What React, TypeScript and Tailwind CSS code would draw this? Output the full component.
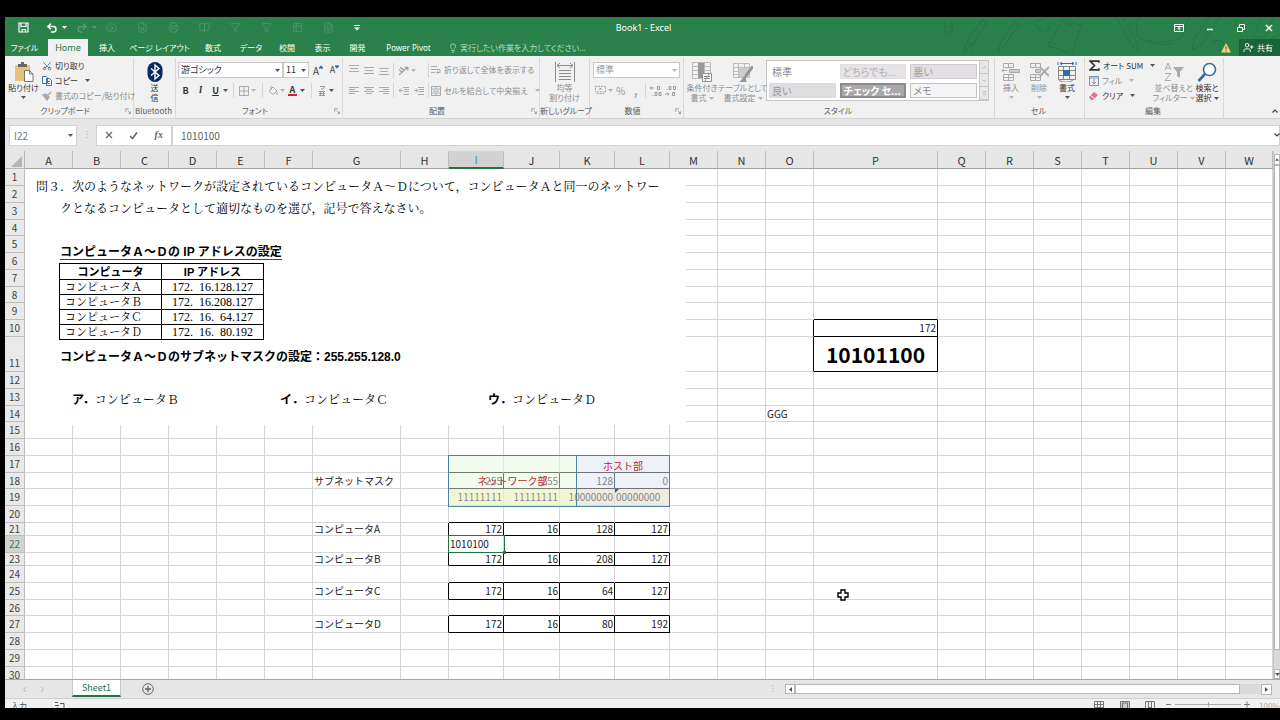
import type { ReactNode } from "react";
import { Undo2, Redo2, Camera, FileSearch, Printer, BookOpen, Filter, Funnel, Table2, FileText, Lightbulb, UserPlus, Scissors } from "lucide-react";

/* ---------- small shared pieces ---------- */

function Caret({ dim = false }: { dim?: boolean }) {
  return (
    <svg viewBox="0 0 5 3" className={`h-[3px] w-[5px] shrink-0 ${dim ? "text-[#b5b5b5]" : "text-[#555]"}`} aria-hidden="true">
      <path d="M0 0h5L2.500 3z" fill="currentColor" />
    </svg>
  );
}

function Ico({ children, className, box = 20 }: { children: ReactNode; className: string; box?: number }) {
  return (
    <svg viewBox={`0 0 ${box} ${box}`} className={`shrink-0 ${className}`} fill="none" stroke="currentColor" aria-hidden="true">
      {children}
    </svg>
  );
}

function Sep() {
  return <span className="mx-0.5 h-[15px] w-px shrink-0 bg-[#d6d6d6]" />;
}

function Launcher() {
  return (
    <Ico box={8} className="size-[6px] text-[#888]">
      <path d="M1 5V1h4M3.500 3.500l4 4M7.500 4.500v3h-3" />
    </Ico>
  );
}

function Group({ label, width, launcher = false, children }: { label: string; width: string; launcher?: boolean; children: ReactNode }) {
  return (
    <section aria-label={label} className={`flex shrink-0 flex-col border-r border-[#d9d9d9] ${width}`}>
      <div className="flex h-[46px]">{children}</div>
      <div className="flex h-[14px] items-center pr-0.5 text-[8px] leading-3 text-[#5a5a5a]">
        <span className="flex-1 whitespace-nowrap text-center">{label}</span>
        {launcher && <Launcher />}
      </div>
    </section>
  );
}

function BigButton({ icon, lines, width, dim = false, caret = "none" }: { icon: ReactNode; lines: string[]; width: string; dim?: boolean; caret?: "none" | "below" | "inline" }) {
  return (
    <button type="button" className={`flex shrink-0 flex-col items-center pt-0.5 ${width} ${dim ? "text-[#8c8c8c]" : "text-[#333]"}`}>
      <span className="flex h-[23px] items-center justify-center">{icon}</span>
      {lines.map((line, i) => (
        <span key={line} className="flex h-[10px] items-center gap-0.5 whitespace-nowrap text-[8px] leading-[10px]">
          {line}
          {caret === "inline" && i === lines.length - 1 && <Caret dim={dim} />}
        </span>
      ))}
      {caret === "below" && <span className="flex h-[8px] items-center"><Caret dim={dim} /></span>}
    </button>
  );
}

function SmallButton({ icon, label, dim = false, caret = false }: { icon: ReactNode; label: string; dim?: boolean; caret?: boolean }) {
  return (
    <button type="button" className={`flex h-[15px] items-center gap-[3px] whitespace-nowrap text-[8px] ${dim ? "text-[#8c8c8c]" : "text-[#333]"}`}>
      {icon}
      {label}
      {caret && <span className="pl-1"><Caret dim={dim} /></span>}
    </button>
  );
}

function Tool({ label, width = "w-[15px]", children }: { label: string; width?: string; children: ReactNode }) {
  return (
    <button type="button" aria-label={label} className={`flex h-[15px] shrink-0 items-center justify-center ${width}`}>
      {children}
    </button>
  );
}

function Lines({ d }: { d: string }) {
  return (
    <Ico box={10} className="size-[10px] text-[#aaa]">
      <path d={d} />
    </Ico>
  );
}

function Combo({ label, value, width, dim = false }: { label: string; value: string; width: string; dim?: boolean }) {
  return (
    <div className={`relative h-[16px] ${width}`}>
      <select aria-label={label} className={`block h-full w-full appearance-none border border-[#c9c9c9] bg-white pl-0.5 text-[9px] leading-3 ${dim ? "text-[#999]" : "text-[#333]"}`}>
        <option>{value}</option>
      </select>
      <span className="pointer-events-none absolute inset-y-0 right-[3px] flex items-center"><Caret dim={dim} /></span>
    </div>
  );
}

/* ---------- title bar and tabs ---------- */

function Doodles() {
  return (
    <svg viewBox="0 0 340 38" className="pointer-events-none absolute right-0 top-0 h-[38px] w-[340px] text-[#237642]" fill="none" stroke="currentColor" aria-hidden="true">
      <path d="M5 7v8q3 5 7 0V7M3 6h3m5 0h3M7 10h4" />
      <path d="M24 34l3-10L42 3l5 3-15 22zM27 24l5 4M40 6l4 3" />
      <path d="M32 34l3-9M58 34l3-9L74 4l5 3-14 21z" />
      <path d="M94 6l8-4 8 8-7 6zM108 29l14-25 19 4-9 30M108 29l20 6M124 6l9 3M112 26l6 2" />
      <path d="M176 0l17 30 5 3-1-7L183 0M193 30l4-4" />
      <path d="M199 0q-5 13 0 21 21 8 42 0l8-21M205 24q15 6 30 2" />
      <path d="M252 33l2-11 16-22M252 33l10-6 18-27M272 26q8-6 12 1t-6 7" />
      <path d="M295 4l12 28 3-2-9-26zM322 0l-9 20h12l9-20M330 22l10-4" />
    </svg>
  );
}

const QAT = [Camera, FileSearch, Printer, BookOpen, Filter, Funnel, Table2, FileText];
const QAT_NAMES = ["カメラ", "印刷プレビュー", "印刷", "ページ設定", "フィルター解除", "フィルター", "表", "フォーム"];

function TitleBar() {
  return (
    <div className="relative grid h-[21px] grid-cols-[1fr_auto_1fr] items-center text-white">
      <div className="flex items-center pl-[13px]">
        <button type="button" aria-label="上書き保存" className="w-[28px]">
          <Ico box={11} className="size-[11px]">
            <path d="M1 1h9v9H1zM3 1v3.500h5V1M4 10V7.500h3.500V10" strokeWidth="1.200" />
          </Ico>
        </button>
        <button type="button" aria-label="元に戻す" className="w-[16px]"><Undo2 size={12} strokeWidth={3} /></button>
        <span className="w-[14px]"><svg viewBox="0 0 5 3" className="h-[3px] w-[5px]" aria-hidden="true"><path d="M0 0h5L2.500 3z" fill="#fff" /></svg></span>
        <button type="button" aria-label="やり直し" className="w-[16px] text-[#55a073]"><Redo2 size={12} strokeWidth={2.500} /></button>
        <span className="w-[14px]"><svg viewBox="0 0 5 3" className="h-[3px] w-[5px]" aria-hidden="true"><path d="M0 0h5L2.500 3z" fill="#55a073" /></svg></span>
        {QAT.map((Icon, i) => (
          <button key={QAT_NAMES[i]} type="button" aria-label={QAT_NAMES[i]} className="w-[31px] text-[#4b9969]"><Icon size={11} strokeWidth={2} /></button>
        ))}
        <button type="button" aria-label="カスタマイズ">
          <Ico box={6} className="size-[6px]"><path d="M0 .5h6" /><path d="M0 2.500h6L3 5.500z" fill="currentColor" stroke="none" /></Ico>
        </button>
      </div>
      <h1 className="pl-0.5 text-[9px] leading-3">Book1 - Excel</h1>
      <div className="flex items-center justify-end">
        <button type="button" aria-label="リボンの表示オプション" className="flex w-[31px] justify-center">
          <Ico box={10} className="size-[10px]"><path d="M.5 1.500h9v7h-9zM.5 3.500h9M5 7.500v-3M3.500 6L5 4.500 6.500 6" /></Ico>
        </button>
        <button type="button" aria-label="最小化" className="flex w-[31px] justify-center">
          <Ico box={8} className="size-[8px]"><path d="M1 5.500h6" strokeWidth="1.500" /></Ico>
        </button>
        <button type="button" aria-label="元のサイズに戻す" className="flex w-[31px] justify-center">
          <Ico box={8} className="size-[8px]"><path d="M.5 3.500h5v4h-5zM2.500 3V.5h5v5H6" /></Ico>
        </button>
        <button type="button" aria-label="閉じる" className="flex w-[24px] justify-center pl-0.5">
          <Ico box={8} className="size-[8px]"><path d="M1 1l6 6M7 1L1 7" strokeWidth="1.500" /></Ico>
        </button>
      </div>
    </div>
  );
}

const TABS: [string, string][] = [
  ["ファイル", "w-[39px] text-[8px]"],
  ["Home", "ml-[4px] w-[40px] bg-[#f1f1f1] text-[9px] text-[#217346]"],
  ["挿入", "w-[38px] text-[8px]"],
  ["ページ レイアウト", "w-[67px] text-[8px]"],
  ["数式", "w-[40px] text-[8px]"],
  ["データ", "w-[36px] text-[8px]"],
  ["校閲", "w-[36px] text-[8px]"],
  ["表示", "w-[35px] text-[8px]"],
  ["開発", "w-[35px] text-[8px]"],
  ["Power Pivot", "w-[67px] text-[8px]"],
];

function TabBar() {
  return (
    <div className="relative flex h-[18px] items-end text-white">
      <nav className="flex h-[17px]">
        {TABS.map(([name, look]) => (
          <button key={name} type="button" className={`whitespace-nowrap leading-3 ${look}`}>
            {name}
          </button>
        ))}
      </nav>
      <label className="flex h-[17px] items-center gap-0.5 pl-[6px] text-[#b8dcc6]">
        <Lightbulb size={10} strokeWidth={2} />
        <input
          aria-label="操作アシスト"
          placeholder="実行したい作業を入力してください..."
          className="w-[150px] bg-transparent text-[8px] leading-3 placeholder:text-[#b8dcc6]"
        />
      </label>
      <div className="ml-auto flex h-[17px] items-center">
        <svg viewBox="0 0 10 10" className="mr-2 size-[10px]" role="img" aria-label="警告">
          <path d="M5 0l5 9.500H0z" fill="#f2cf7c" />
          <path d="M5 3.500v3M5 7.500v1" stroke="#5c4a1c" />
        </svg>
        <button type="button" className="flex h-full w-[41px] items-center gap-[3px] bg-[#1b6338] pl-1 text-[8px] leading-3">
          <UserPlus size={11} strokeWidth={2} />
          共有
        </button>
      </div>
    </div>
  );
}

/* ---------- ribbon ---------- */

const STYLE_CELLS: [string, string][] = [
  ["標準", "border-white bg-white text-[#8a8a8a]"],
  ["どちらでも...", "border-[#e2dfe2] bg-[#e6e3e6] text-[#b3b0b3]"],
  ["悪い", "border-[#cfcbcf] bg-[#e2dfe2] text-[#a09da0]"],
  ["良い", "border-[#dddadd] bg-[#e0dde0] text-[#999]"],
  ["チェック セ...", "border-2 border-[#8c8a8c] bg-[#aaa8aa] font-bold text-white"],
  ["メモ", "border-[#c3c0c3] bg-[#f6f4f6] text-[#8a8a8a]"],
];

function Ribbon() {
  return (
    <div className="flex h-[63px] shrink-0 overflow-hidden border-b border-[#d2d2d2] bg-[#f1f1f1] pt-0.5 [font-feature-settings:'palt']">
      <Group label="クリップボード" width="w-[129px]" launcher>
        <BigButton
          width="w-[37px]"
          lines={["貼り付け"]}
          caret="below"
          icon={
            <Ico className="size-[20px]">
              <path d="M1 3h15v16H1z" fill="#e8c27c" stroke="none" />
              <path d="M4 2h9v3H4zM7 0h3v2H7z" fill="#666" stroke="none" />
              <path d="M10.500 8.500h5l3.500 3.500v7.500h-8.500zM15.500 8.500V12H19" fill="#fff" stroke="#777" />
            </Ico>
          }
        />
        <div className="flex flex-col">
          <SmallButton label="切り取り" icon={<Scissors size={10} className="-rotate-90 text-[#3b6a99]" />} />
          <SmallButton
            label="コピー"
            caret
            icon={<Ico box={10} className="size-[10px] text-[#4a7199]"><path d="M.5 .5h4l1 1v6h-5zM4.500 2.500h3l2 2v5h-5zM6 5.500h2M6 7.500h2" fill="#fff" /></Ico>}
          />
          <SmallButton
            dim
            label="書式のコピー/貼り付け"
            icon={<Ico box={10} className="size-[10px] text-[#aaa]"><path d="M1 4l3-1 3 3-2 3zM6 4l3-3" fill="currentColor" strokeWidth="1.400" /></Ico>}
          />
        </div>
      </Group>

      <Group label="Bluetooth" width="w-[42px]">
        <BigButton
          width="w-full"
          lines={["送", "信"]}
          icon={
            <svg viewBox="0 0 16 20" className="h-[20px] w-[16px]" aria-hidden="true">
              <rect x=".5" width="15" height="20" rx="7.500" fill="#0a2a5e" />
              <path d="M4 6.500l8 7L8 17V3l4 3.500-8 7" fill="none" stroke="#fff" strokeWidth="1.400" />
            </svg>
          }
        />
      </Group>

      <Group label="フォント" width="w-[167px]" launcher>
        <div className="flex flex-col gap-[5px] pl-0.5 pt-1">
          <div className="flex items-center">
            <Combo label="フォント名" value="游ゴシック" width="w-[105px]" />
            <Combo label="フォント サイズ" value="11" width="w-[26px]" />
            <Tool label="フォント サイズの拡大" width="w-[18px]"><span className="text-[10px] text-[#444]">A</span><Ico box={5} className="mb-1.5 size-[4px] text-[#3b6a99]"><path d="M0 4l2.500-3L5 4z" fill="currentColor" /></Ico></Tool>
            <Tool label="フォント サイズの縮小" width="w-[15px]"><span className="text-[9px] text-[#444]">A</span><Ico box={5} className="mb-1.5 size-[4px] text-[#3b6a99]"><path d="M0 1l2.500 3L5 1z" fill="currentColor" /></Ico></Tool>
          </div>
          <div className="flex items-center text-[9px] text-[#333]">
            <Tool label="太字"><b>B</b></Tool>
            <Tool label="斜体"><i className="font-serif font-bold">I</i></Tool>
            <Tool label="下線"><u className="font-bold">U</u></Tool>
            <Caret />
            <span className="w-[3px]" />
            <Sep />
            <Tool label="罫線"><Ico box={10} className="size-[10px] text-[#aaa]"><path d="M.5 .5h9v9h-9zM5 0v10M0 5h10" /></Ico></Tool>
            <Caret dim />
            <span className="w-[4px]" />
            <Sep />
            <Tool label="塗りつぶしの色"><Ico box={10} className="size-[10px] text-[#aaa]"><path d="M1 5l4-4 4 4-4 3.500zM9 6v3M3 4V0" /></Ico></Tool>
            <Caret dim />
            <Tool label="フォントの色">
              <span className="border-b-2 border-[#d0202a] px-0.5 text-[9px] font-bold leading-[9px] text-[#333]">A</span>
            </Tool>
            <Caret />
            <span className="w-[4px]" />
            <Sep />
            <Tool label="ふりがな"><Ico box={10} className="size-[10px] text-[#999]"><path d="M3 .5h5L6 3M5 2v2M2 5.500h6M2 9.500h6M3.500 5v4M6.500 5v4M2 7.500h6" /></Ico></Tool>
            <Caret />
          </div>
        </div>
      </Group>

      <Group label="配置" width="w-[197px]" launcher>
        <div className="flex flex-col gap-[5px] pl-[3px] pt-1">
          <div className="flex h-[16px] items-center">
            <Tool label="上揃え"><Lines d="M0 .5h10M1 3.500h8M0 6.500h10" /></Tool>
            <Tool label="上下中央揃え"><Lines d="M0 2.500h10M1 5.500h8M0 8.500h10" /></Tool>
            <Tool label="下揃え"><Lines d="M0 3.500h10M1 6.500h8M0 9.500h10" /></Tool>
            <Sep />
            <Tool label="方向"><Ico box={10} className="size-[11px] text-[#999]"><path d="M1 9l8-7M6 2h3v3M1 4l3 3M2 2l4 3" /></Ico></Tool>
            <Caret dim />
            <span className="w-[10px]" />
            <Sep />
            <SmallButton dim label="折り返して全体を表示する" icon={<Ico box={10} className="size-[10px] text-[#aaa]"><path d="M0 1.500h6M0 4.500h9v3H6M0 7.500h4M7 6l-1.500 1.500L7 9" /></Ico>} />
          </div>
          <div className="flex items-center">
            <Tool label="左揃え"><Lines d="M0 1.500h10M0 3.500h6M0 5.500h10M0 7.500h6" /></Tool>
            <Tool label="中央揃え"><Lines d="M0 1.500h10M2 3.500h6M0 5.500h10M2 7.500h6" /></Tool>
            <Tool label="右揃え"><Lines d="M0 1.500h10M4 3.500h6M0 5.500h10M4 7.500h6" /></Tool>
            <Sep />
            <Tool label="インデントを減らす"><Lines d="M4 1.500h6M5 3.500h5M5 5.500h5M4 8.500h6M4 4.500H0M2 2.500L0 4.500l2 2" /></Tool>
            <Tool label="インデントを増やす"><Lines d="M4 1.500h6M5 3.500h5M5 5.500h5M4 8.500h6M0 4.500h4M2 2.500l2 2-2 2" /></Tool>
            <Sep />
            <SmallButton dim caret label="セルを結合して中央揃え" icon={<Ico box={10} className="size-[10px] text-[#aaa]"><path d="M.5 .5h9v9h-9zM0 3h10M0 7h10M5 0v3M5 7v3M2 5h6" /></Ico>} />
          </div>
        </div>
      </Group>

      <Group label="新しいグループ" width="w-[50px]">
        <BigButton
          dim
          width="w-full"
          lines={["均等", "割り付け"]}
          icon={<Ico className="size-[20px]"><path d="M.5 0v20M19.500 0v20M2 3.500h16M5 1L2 3.500 5 6M15 1l3 2.500L15 6M4 8.500h12M4 11.500h12M4 14.500h12M4 17.500h12" /></Ico>}
        />
      </Group>

      <Group label="数値" width="w-[94px]" launcher>
        <div className="flex flex-col gap-[5px] pl-[3px] pt-1">
          <Combo label="表示形式" value="標準" width="w-[87px]" dim />
          <div className="flex items-center text-[10px] text-[#999]">
            <Tool label="通貨表示形式"><Ico box={12} className="size-[11px]"><path d="M.5 1.500h11v6H.5zM2 9.500h8M6 3v3M4 4.500h4" strokeDasharray="2 1" /></Ico></Tool>
            <Caret dim />
            <Tool label="パーセント スタイル">%</Tool>
            <Tool label="桁区切り"><b>,</b></Tool>
            <Sep />
            <Tool label="小数点以下の表示桁数を増やす">
              <Ico box={12} className="size-[12px]"><path d="M0 3h4M1.500 1.500L0 3l1.500 1.500M7.500 1.500h2v3h-2zM2.500 10.500h1M5 7.500h2v3H5zM9 7.500h2v3H9z" /></Ico>
            </Tool>
            <Tool label="小数点以下の表示桁数を減らす">
              <Ico box={12} className="size-[12px]"><path d="M1.500 4.500h1M4 1.500h2v3H4zM8.500 1.500h2v3h-2zM0 9h4M2.500 7.500L4 9l-1.500 1.500M7.500 7.500h2v3h-2z" /></Ico>
            </Tool>
          </div>
        </div>
      </Group>

      <Group label="スタイル" width="w-[311px]">
        <BigButton
          dim
          width="w-[36px]"
          lines={["条件付き", "書式"]}
          caret="inline"
          icon={
            <Ico className="size-[20px]">
              <path d="M.5 .5h18v16H.5zM0 4.500h18M0 8.500h18M0 12.500h18M12.500 0v16" stroke="#bbb" />
              <path d="M6 1h6v15H6z" fill="#999" stroke="none" />
              <path d="M10.500 11.500h9v8h-9zM12 14.500h6M12 16.500h6M13 19l4-7" fill="#fff" />
            </Ico>
          }
        />
        <BigButton
          dim
          width="w-[46px]"
          lines={["テーブルとして", "書式設定"]}
          caret="inline"
          icon={
            <Ico className="size-[20px]">
              <path d="M.5 1.500h16v14H.5zM0 5.500h16M0 9.500h16M0 12.500h16M5.500 1v14M11.500 1v14" stroke="#bbb" />
              <path d="M6 6h10v9H6z" fill="#ccc" stroke="none" />
              <path d="M19 4l-7 9 1.500 1.500L20 6zM12 14l-5 6h6z" fill="#999" />
            </Ico>
          }
        />
        <div className="mb-1 mt-0.5 flex h-[41px] flex-1 border border-[#c6c6c6] bg-white">
          <div className="grid flex-1 grid-cols-3 gap-1 p-0.5 pt-[3px]">
            {STYLE_CELLS.map(([name, look]) => (
              <button key={name} type="button" className={`h-[15px] overflow-hidden whitespace-nowrap border pl-0.5 text-left text-[10px] leading-[12px] ${look}`}>
                {name}
              </button>
            ))}
          </div>
          <div className="flex w-[9px] flex-col border-l border-[#c6c6c6] bg-[#e8e8e8]">
            {["M1 4l2-2 2 2", "M1 2l2 2 2-2", "M1 1h4M1 3l2 2 2-2"].map((d, i) => (
              <button key={d} type="button" aria-label={["上へ", "下へ", "その他"][i]} className="flex flex-1 items-center justify-center border-b border-[#c6c6c6]">
                <Ico box={6} className="size-[5px] text-[#aaa]"><path d={d} /></Ico>
              </button>
            ))}
          </div>
        </div>
        <span className="w-[5px]" />
      </Group>

      <Group label="セル" width="w-[90px]">
        <span className="w-[2px]" />
        <BigButton dim width="w-[28px]" lines={["挿入"]} caret="below" icon={<Ico className="size-[20px] text-[#aaa]"><path d="M2.500 1.500h10v4h-10zM7.500 1v4M2.500 12.500h10v6h-10zM7.500 12v6M2 15.500h10M6 8.500h-5M3 6.500l-2 2 2 2" /><path d="M8.500 7.500h10v3h-10z" fill="#ccc" /></Ico>} />
        <BigButton dim width="w-[28px]" lines={["削除"]} caret="below" icon={<Ico className="size-[20px] text-[#aaa]"><path d="M1.500 1.500h10v4h-10zM6.500 1v4M1.500 12.500h10v6h-10zM6.500 12v6M1 15.500h10" /><path d="M6.500 7.500h5v3h-5z" fill="#ccc" /><path d="M11 5l9 9M20 5l-9 9" strokeWidth="1.800" /></Ico>} />
        <BigButton width="w-[28px]" lines={["書式"]} caret="below" icon={<Ico className="size-[20px]"><path d="M1.500 4.500h17v13h-17zM1 8.500h17M1 13.500h17M6.500 4v13M12.500 4v13M2 18l3 2h8l3-2" stroke="#888" /><path d="M6 8h7v6H6z" fill="#2f6ca8" stroke="none" /><path d="M4 1.500h12M5 0L3 1.500 5 3M15 0l2 1.500L15 3M1 0v3M19 0v3" stroke="#2f6ca8" /></Ico>} />
      </Group>

      <Group label="編集" width="w-[139px]">
        <div className="flex w-[70px] flex-col pl-1">
          <SmallButton label="オート SUM" caret icon={<Ico box={10} className="size-[11px] text-[#333]"><path d="M9 2.500V1H1l4 4-4 4h8V7.500" strokeWidth="1.500" /></Ico>} />
          <SmallButton dim label="フィル" caret icon={<Ico box={10} className="size-[10px] text-[#7d95ab]"><path d="M.5 .5h9v9h-9zM.5 2h9M5 3v5M3 6l2 2 2-2" /></Ico>} />
          <SmallButton label="クリア" caret icon={<Ico box={10} className="size-[10px]"><path d="M0 6l5-5 4 3-5 5H2z" fill="#e0709a" stroke="none" /><path d="M1.500 4.500l4 3" stroke="#fff" /></Ico>} />
        </div>
        <BigButton
          dim
          width="w-[37px]"
          lines={["並べ替えと", "フィルター"]}
          caret="inline"
          icon={<Ico className="size-[20px] text-[#aaa]"><path d="M1 8l3-7 3 7M2 6h4M1 11.500h6l-6 7h6" /><path d="M9 5h11l-4 5v6l-3-2v-4z" fill="#aaa" stroke="none" /></Ico>}
        />
        <BigButton
          width="w-[30px]"
          lines={["検索と", "選択"]}
          caret="inline"
          icon={<Ico className="size-[20px] text-[#2f6ca8]"><circle cx="12.500" cy="7.500" r="6" strokeWidth="1.600" fill="#fff" /><path d="M8 12l-6.500 7" strokeWidth="2.600" /></Ico>}
        />
      </Group>
      <div className="flex flex-1 items-end justify-end pb-1 pr-0.5">
        <button type="button" aria-label="リボンを折りたたむ">
          <Ico box={6} className="size-[6px] text-[#444]"><path d="M.5 4.500L3 2l2.500 2.500" strokeWidth="1.200" /></Ico>
        </button>
      </div>
    </div>
  );
}

/* ---------- formula bar ---------- */

function FormulaBar() {
  return (
    <div className="flex h-[32px] shrink-0 items-center bg-[#e6e6e6] pl-1">
      <div className="relative h-[21px] w-[68px]">
        <input aria-label="名前ボックス" defaultValue="I22" className="block h-full w-full border border-[#d2d2d2] bg-white pl-1 text-[10px] leading-3 text-[#7a7a7a]" />
        <span className="pointer-events-none absolute inset-y-0 right-1 flex items-center"><Caret /></span>
      </div>
      <span className="flex w-[19px] justify-center text-[#aaa]">
        <Ico box={8} className="size-[8px]"><path d="M4 0v8" strokeDasharray="1 2" /></Ico>
      </span>
      <div className="flex h-[21px] w-[76px] items-center justify-around border border-[#d2d2d2] bg-white text-[#666]">
        <button type="button" aria-label="キャンセル"><Ico box={8} className="size-[8px]"><path d="M1 1l6 6M7 1L1 7" strokeWidth="1.200" /></Ico></button>
        <button type="button" aria-label="入力"><Ico box={9} className="size-[9px]"><path d="M1 5l2.500 2.500L8 1.500" strokeWidth="1.600" /></Ico></button>
        <button type="button" aria-label="関数の挿入" className="font-['Liberation_Serif',serif] text-[10px] font-bold italic leading-3">fx</button>
      </div>
      <div className="relative h-[21px] flex-1">
        <input aria-label="数式バー" defaultValue="1010100" className="block h-full w-full border border-[#d2d2d2] bg-white pl-2 text-[10px] leading-3 text-[#5a6a5a]" />
        <span className="pointer-events-none absolute inset-y-0 right-0 flex items-center"><Ico box={6} className="size-[6px] text-[#444]"><path d="M.5 1.500L3 4l2.500-2.500" strokeWidth="1.200" /></Ico></span>
      </div>
    </div>
  );
}

/* ---------- sheet ---------- */

const COLS: [string, string][] = [
  ["A", "w-[48px]"], ["B", "w-[48px]"], ["C", "w-[48px]"], ["D", "w-[48px]"], ["E", "w-[48px]"], ["F", "w-[48px]"],
  ["G", "w-[88px]"], ["H", "w-[48px]"], ["I", "w-[55px]"], ["J", "w-[56px]"], ["K", "w-[55px]"], ["L", "w-[55px]"],
  ["M", "w-[48px]"], ["N", "w-[48px]"], ["O", "w-[48px]"], ["P", "w-[124px]"], ["Q", "w-[48px]"], ["R", "w-[48px]"],
  ["S", "w-[48px]"], ["T", "w-[48px]"], ["U", "w-[48px]"], ["V", "w-[48px]"], ["W", "w-auto"],
];

const ROW_HEIGHTS: Record<number, string> = {
  4: "h-[16px]", 8: "h-[16px]", 11: "h-[35px]", 14: "h-[16px]", 18: "h-[16px]", 21: "h-[13px]", 23: "h-[13px]", 26: "h-[16px]",
};

const CELLS: Record<string, string> = {
  P10: "172", P11: "10101100", O14: "GGG",
  G18: "サブネットマスク", I18: "255", J18: "255", K18: "128", L18: "0",
  I19: "11111111", J19: "11111111", K19: "10000000", L19: "00000000",
  G21: "コンピュータA", I21: "172", J21: "16", K21: "128", L21: "127",
  I22: "1010100",
  G23: "コンピュータB", I23: "172", J23: "16", K23: "208", L23: "127",
  G25: "コンピュータC", I25: "172", J25: "16", K25: "64", L25: "127",
  G27: "コンピュータD", I27: "172", J27: "16", K27: "80", L27: "192",
};

const LEFT_ALIGNED = new Set(["O14", "L19", "I22"]);

function boxed(col: string | undefined, row: number) {
  if (!col) return false;
  if (col === "P") return row === 10 || row === 11;
  return "IJKL".includes(col) && [18, 21, 23, 25, 27].includes(row);
}

function Cell({ index, row }: { index: number; row: number }) {
  const col = COLS[index][0];
  const next = COLS[index + 1]?.[0];
  const key = `${col}${row}`;
  const text = CELLS[key];
  const bottom = boxed(col, row) || boxed(col, row + 1) ? "border-b-black" : "border-b-[#d6d6d6]";
  const right = boxed(col, row) || boxed(next, row) ? "border-r-black" : "border-r-[#d6d6d6]";
  const align = col === "G" || LEFT_ALIGNED.has(key) ? "text-left" : "text-right";
  const fill = row === 19 && "IJKL".includes(col) ? "bg-[#fff2cc]" : "bg-white";
  const look = key === "P11" ? "text-center text-[21px] leading-[24px] font-bold text-black" : `text-[10px] leading-3 text-[#222] ${align}`;
  return <td className={`whitespace-nowrap border-b border-r px-px py-0 align-middle ${bottom} ${right} ${fill} ${look}`}>{text}</td>;
}

const ADDRESSES: [string, string][] = [
  ["コンピュータＡ", "172.\u200716.128.127"],
  ["コンピュータＢ", "172.\u200716.208.127"],
  ["コンピュータＣ", "172.\u200716.\u200764.127"],
  ["コンピュータＤ", "172.\u200716.\u200780.192"],
];

const CHOICES: [string, string][] = [["ア．", "コンピュータＢ"], ["イ．", "コンピュータＣ"], ["ウ．", "コンピュータＤ"]];

const MINCHO = "font-['Liberation_Serif','Noto_Serif_CJK_JP','Noto_Sans_CJK_JP',serif]";
const GOTHIC = "font-['Liberation_Sans','Noto_Sans_CJK_JP',sans-serif]";

function Question() {
  return (
    <div className={`absolute left-[20px] top-[18px] h-[256px] w-[661px] bg-white pt-[7px] text-[12px] text-black ${MINCHO}`}>
      <p className="whitespace-nowrap pl-[11px] leading-[22px]">問３．次のようなネットワークが設定されているコンピュータＡ～Ｄについて，コンピュータＡと同一のネットワー</p>
      <p className="whitespace-nowrap pl-[35px] leading-[22px]">クとなるコンピュータとして適切なものを選び，記号で答えなさい。</p>
      <h2 className={`ml-[35px] mt-[25px] w-max border-b border-[#444] font-bold leading-[14px] ${GOTHIC}`}>コンピュータＡ～Ｄの IP アドレスの設定</h2>
      <table className="ml-[34px] mt-[3px] w-[205px] table-fixed border-collapse text-[11px] leading-3">
        <thead>
          <tr className={`h-[16px] ${GOTHIC}`}>
            <th className="border border-black p-0 font-bold">コンピュータ</th>
            <th className="border border-black p-0 font-bold">IP アドレス</th>
          </tr>
        </thead>
        <tbody>
          {ADDRESSES.map(([name, ip]) => (
            <tr key={name} className="h-[15px]">
              <td className="border border-black py-0 pl-[5px] pr-0">{name}</td>
              <td className="whitespace-nowrap border border-black p-0 text-center text-[12px]">{ip}</td>
            </tr>
          ))}
        </tbody>
      </table>
      <p className={`ml-[35px] mt-[9px] whitespace-nowrap font-bold leading-[16px] ${GOTHIC}`}>コンピュータＡ～Ｄのサブネットマスクの設定：255.255.128.0</p>
      <ul className="ml-[47px] mt-[26px] grid grid-cols-[208px_208px_208px] leading-[18px]">
        {CHOICES.map(([mark, name]) => (
          <li key={mark} className="flex">
            <b className={GOTHIC}>{mark}</b>
            <span>{name}</span>
          </li>
        ))}
      </ul>
    </div>
  );
}

function Sheet() {
  return (
    <div className="flex min-h-0 flex-1 bg-[#e6e6e6]">
      <div className="relative min-w-0 flex-1 overflow-hidden">
        <table className="w-full table-fixed border-separate border-spacing-0">
          <colgroup>
            <col className="w-[20px]" />
            {COLS.map(([name, w]) => <col key={name} className={w} />)}
          </colgroup>
          <thead>
            <tr className="h-[18px] text-[11px] leading-3 text-[#333]">
              <th className="border-b border-r border-[#b5b5b5] p-0">
                <svg viewBox="0 0 12 12" className="ml-[6px] mt-1 size-[11px]" aria-hidden="true"><path d="M12 0v12H0z" fill="#b5b5b5" /></svg>
              </th>
              {COLS.map(([name]) => (
                <th key={name} className={`border-r border-r-[#bdbdbd] p-0 font-normal ${name === "I" ? "border-b-2 border-b-[#217346] bg-[#d2d2d2] text-[#3f8f97]" : "border-b border-b-[#9f9f9f]"}`}>
                  {name}
                </th>
              ))}
            </tr>
          </thead>
          <tbody>
            {Array.from({ length: 30 }, (_, i) => i + 1).map((row) => (
              <tr key={row} className={ROW_HEIGHTS[row] ?? "h-[17px]"}>
                <th className={`border-b border-r border-[#bdbdbd] p-0 text-[10px] font-normal leading-3 ${row === 11 ? "pb-0.5 align-bottom" : "align-middle"} ${row === 22 ? "bg-[#d2d2d2] text-[#3a7d55]" : "bg-[#e9e9e9] text-[#444]"}`}>{row}</th>
                {COLS.map(([name], c) => <Cell key={name} index={c} row={row} />)}
              </tr>
            ))}
          </tbody>
        </table>

        <Question />

        {/* shapes laid over the subnet mask rows */}
        <div className="absolute left-[443px] top-[304px] flex h-[52px] w-[129px] items-center justify-center border border-[#4f82a0] bg-[#e5f7dd]/50 text-[10px] leading-3 text-[#c21f2c]">ネットワーク部</div>
        <div className="absolute left-[571px] top-[304px] flex h-[52px] w-[94px] justify-center border border-[#4f82a0] bg-[#dde5f1]/50 pt-1 text-[10px] leading-3 text-[#c21f2c]">ホスト部</div>
        <svg viewBox="0 0 4 4" className="absolute left-[610px] top-[338px] size-[4px]" aria-hidden="true"><path d="M0 0h4L0 4z" fill="#217346" /></svg>
        <div className="absolute left-[443px] top-[384px] h-[18px] w-[57px] border border-[#217346]" />
        <div className="absolute left-[498px] top-[400px] size-[3px] bg-[#217346]" />
        <svg viewBox="0 0 12 12" className="absolute left-[832px] top-[438px] size-[12px]" aria-hidden="true">
          <path d="M4 1h4v3h3v4H8v3H4V8H1V4h3z" fill="#fff" stroke="#000" strokeWidth="1.400" />
        </svg>
      </div>
      <div className="flex w-[7px] flex-col overflow-hidden border-l border-[#c8c8c8] pt-[3px]">
        <button type="button" aria-label="上にスクロール" className="flex h-[11px] items-center justify-center border border-[#b5b5b5] bg-white"><svg viewBox="0 0 5 3" className="h-[3px] w-[5px] rotate-180" aria-hidden="true"><path d="M0 0h5L2.500 3z" fill="#555" /></svg></button>
        <div className="flex-1 border border-[#b5b5b5] bg-white" />
        <div className="h-[19px] bg-[#d9d9d9]" />
        <button type="button" aria-label="下にスクロール" className="flex h-[10px] items-center justify-center border border-[#b5b5b5] bg-white"><Caret /></button>
      </div>
    </div>
  );
}

/* ---------- bottom bars ---------- */

function SheetTabs() {
  return (
    <div className="flex h-[19px] shrink-0 items-center border-t border-[#a6a6a6] bg-[#e6e6e6]">
      <button type="button" aria-label="前のシート" className="ml-[17px] w-[18px]"><Ico box={5} className="size-[5px] text-[#b5b5b5]"><path d="M4 0L1.500 2.500 4 5" /></Ico></button>
      <button type="button" aria-label="次のシート" className="w-[18px]"><Ico box={5} className="size-[5px] text-[#b5b5b5]"><path d="M1 0l2.500 2.500L1 5" /></Ico></button>
      <button type="button" className="ml-[14px] w-[49px] self-start border-x border-b-2 border-x-[#c6c6c6] border-b-[#217346] bg-white text-[9px] leading-[15px] text-[#217346]">Sheet1</button>
      <button type="button" aria-label="新しいシート" className="ml-[21px]"><Ico box={12} className="size-[12px] text-[#666]"><circle cx="6" cy="6" r="5.300" /><path d="M6 3v6M3 6h6" strokeWidth="1.400" /></Ico></button>
      <div className="ml-auto flex w-[511px] items-center">
        <Ico box={8} className="mr-2 size-[8px] text-[#aaa]"><path d="M4 0v8" strokeDasharray="1 2" /></Ico>
        <button type="button" aria-label="左にスクロール" className="flex size-[10px] items-center justify-center border border-[#b5b5b5] bg-white"><svg viewBox="0 0 3 5" className="h-[5px] w-[3px]" aria-hidden="true"><path d="M3 0v5L0 2.500z" fill="#555" /></svg></button>
        <div className="h-[10px] flex-1 border border-[#b5b5b5] bg-white" />
        <div className="h-[10px] w-[21px] bg-[#d9d9d9]" />
        <button type="button" aria-label="右にスクロール" className="mr-2 flex size-[11px] items-center justify-center border border-[#b5b5b5] bg-white"><svg viewBox="0 0 3 5" className="h-[5px] w-[3px]" aria-hidden="true"><path d="M0 0v5l3-2.500z" fill="#555" /></svg></button>
      </div>
    </div>
  );
}

function StatusBar() {
  return (
    <footer className="flex h-[10px] shrink-0 items-start overflow-hidden border-t border-[#cfcfcf] bg-[#f1f1f1] pt-0.5 text-[8px] leading-[10px] text-[#555]">
      <span className="pl-[6px]">入力</span>
      <Ico box={10} className="ml-[28px] size-[10px]"><path d="M0 1.500h3M5 2.500h4V10M0 4.500h4M2.500 6.500V10" /></Ico>
      <div className="ml-auto flex items-start text-[#777]">
        <button type="button" aria-label="標準" className="w-[26px]"><Ico box={10} className="size-[10px]"><path d="M.5 .5h9v9h-9zM3.500 0v10M6.500 0v10M0 3.500h10M0 6.500h10" /></Ico></button>
        <button type="button" aria-label="ページ レイアウト" className="w-[25px]"><Ico box={10} className="size-[10px]"><path d="M.5 .5h9v9h-9zM2.500 2h5v8h-5z" fill="#ccc" /></Ico></button>
        <button type="button" aria-label="改ページ プレビュー" className="w-[20px]"><Ico box={10} className="size-[10px]"><path d="M.5 .5h9v9h-9zM3.500 0v6M6.500 0v6M3 6.500h4" /></Ico></button>
        <Ico box={8} className="mr-0.5 size-[8px]"><path d="M1 3.500h5" /></Ico>
        <svg viewBox="0 0 66 8" className="h-[8px] w-[66px]" aria-hidden="true"><path d="M0 3.500h66M33.500 1v5" stroke="#aaa" /></svg>
        <Ico box={8} className="ml-0.5 size-[8px]"><path d="M1 3.500h6M4 .5v6" /></Ico>
        <span className="w-[29px] pl-2 text-[8px] text-[#aaa]">100%</span>
      </div>
    </footer>
  );
}

export default function App() {
  return (
    <div className="h-screen bg-black pb-3 pl-[5px] pt-[17px] font-['Noto_Sans_CJK_JP',sans-serif]">
      <main className="flex h-full min-h-0 flex-col overflow-hidden bg-[#e6e6e6]">
        <header className="relative shrink-0 bg-[#2a8149] font-['Noto_Sans','Noto_Sans_CJK_JP',sans-serif] [font-feature-settings:'palt']">
          <Doodles />
          <TitleBar />
          <TabBar />
        </header>
        <Ribbon />
        <FormulaBar />
        <Sheet />
        <SheetTabs />
        <StatusBar />
      </main>
    </div>
  );
}
